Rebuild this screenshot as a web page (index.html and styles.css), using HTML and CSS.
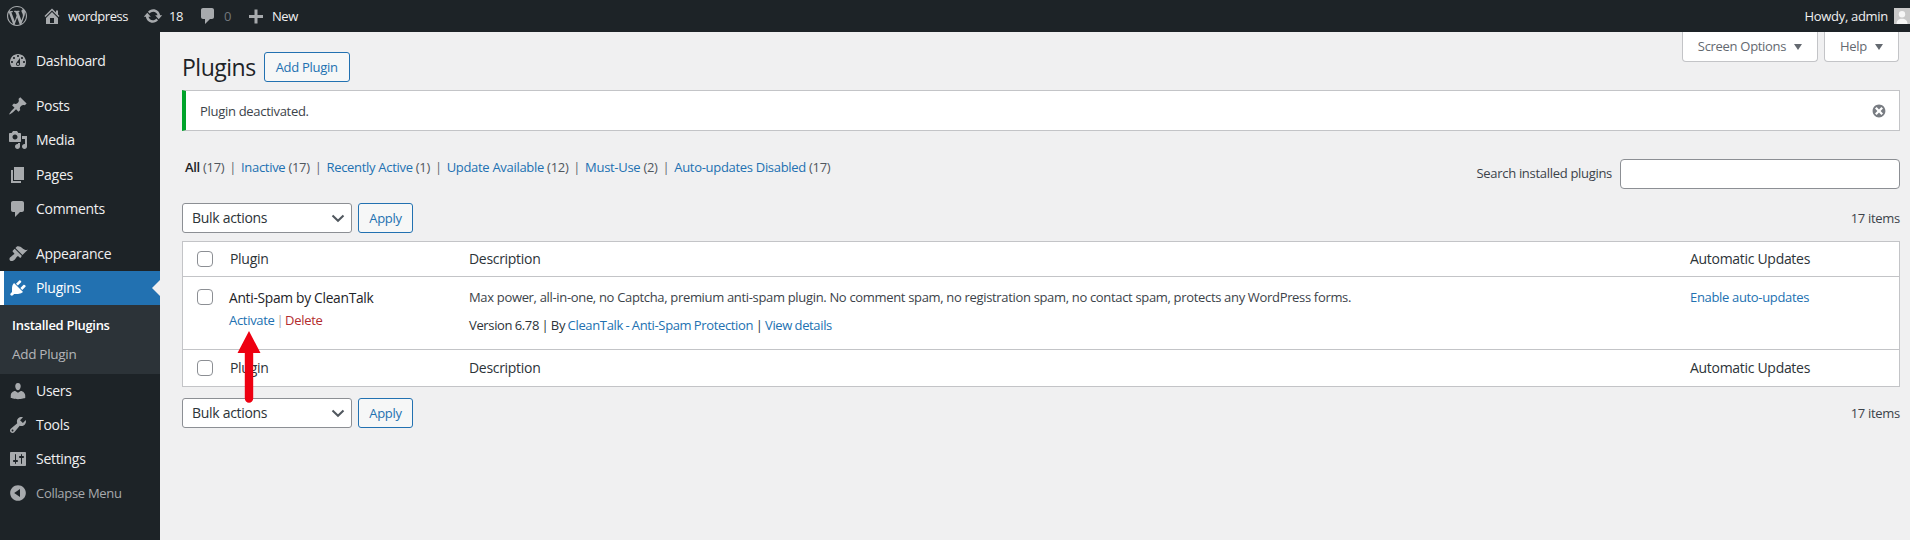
FILE: index.html
```html
<!DOCTYPE html>
<html lang="en">
<head>
<meta charset="utf-8">
<title>Plugins</title>
<link rel="stylesheet" href="styles.css">
</head>
<body>
<header class="adminbar">
  <div class="bar-left">
    <svg class="ab-logo" viewBox="0 0 20 20"><path d="M20 10c0-5.51-4.49-10-10-10C4.48 0 0 4.49 0 10c0 5.52 4.48 10 10 10 5.51 0 10-4.48 10-10zM7.78 15.37L4.37 6.22c.55-.02 1.17-.08 1.17-.08.5-.06.44-1.13-.06-1.11 0 0-1.45.11-2.37.11-.18 0-.37 0-.58-.01C4.12 2.69 6.87 1.11 10 1.11c2.33 0 4.45.87 6.05 2.34-.68-.11-1.65.39-1.65 1.58 0 .74.45 1.36.9 2.1.35.61.55 1.36.55 2.46 0 1.49-1.4 5-1.4 5l-3.03-8.37c.54-.02.82-.17.82-.17.5-.05.44-1.25-.06-1.22 0 0-1.44.12-2.38.12-.87 0-2.33-.12-2.33-.12-.5-.03-.56 1.2-.06 1.22l.92.08 1.26 3.41zM17.41 10c.24-.64.74-1.87.43-4.25.7 1.29 1.05 2.71 1.05 4.25 0 3.29-1.73 6.24-4.4 7.78.97-2.59 1.94-5.2 2.92-7.78zM6.1 18.09C3.12 16.65 1.11 13.53 1.11 10c0-1.3.23-2.48.72-3.59C3.25 10.3 4.67 14.2 6.1 18.09zm4.03-6.63l2.58 6.98c-.86.29-1.76.45-2.71.45-.79 0-1.57-.11-2.29-.33.81-2.38 1.62-4.74 2.42-7.1z"/></svg>
    <span class="ab-item ab-home"><svg class="ab-icon" viewBox="0 0 20 20"><path d="M16 8.5l1.53 1.53-1.06 1.06L10 4.62l-6.47 6.47-1.06-1.06L10 2.5l4 4v-2h2v4zm-6-2.46l6 5.99V18H4v-5.97zM12 17v-5H8v5h4z"/></svg>wordpress</span>
    <span class="ab-item ab-upd"><svg class="ab-icon" viewBox="0 0 20 20"><path d="M10.2 3.28c3.53 0 6.43 2.61 6.92 6h2.08l-3.5 4-3.5-4h2.32c-.45-1.97-2.21-3.45-4.32-3.45-1.45 0-2.73.71-3.54 1.78L4.95 5.66C6.23 4.2 8.11 3.28 10.2 3.28zm-.4 13.44c-3.52 0-6.43-2.61-6.92-6H.8l3.5-4c1.17 1.33 2.33 2.67 3.5 4H5.48c.45 1.97 2.21 3.45 4.32 3.45 1.45 0 2.73-.71 3.54-1.78l1.71 1.95c-1.28 1.46-3.15 2.38-5.25 2.38z"/></svg>18</span>
    <span class="ab-item ab-com"><svg class="ab-icon" viewBox="0 0 20 20"><path d="M5 2h9c1.1 0 2 .9 2 2v7c0 1.1-.9 2-2 2h-2l-5 5v-5H5c-1.1 0-2-.9-2-2V4c0-1.1.9-2 2-2z"/></svg><span class="ab-zero">0</span></span>
    <span class="ab-item ab-new"><svg class="ab-icon" viewBox="0 0 20 20"><path d="M17 9v3h-5.5v5.5h-3V12H3V9h5.5V3.500h3V9z"/></svg>New</span>
  </div>
  <div class="bar-right">Howdy, admin<svg class="avatar" viewBox="0 0 16 16"><rect width="16" height="16" fill="#c9c9c9"/><circle cx="8" cy="6.300" r="3.200" fill="#f6f6f6"/><path d="M2.500 16c0-3.600 2.400-5.200 5.500-5.200s5.500 1.600 5.500 5.200z" fill="#f6f6f6"/></svg></div>
</header>

<div class="shell">
  <nav class="sidebar">
    <a class="menu-item first"><svg viewBox="0 0 20 20"><path fill-rule="evenodd" d="M3.760 16h12.480c1.100-1.370 1.760-3.110 1.760-5 0-4.420-3.580-8-8-8s-8 3.580-8 8c0 1.890.66 3.630 1.760 5zM10 4c.55 0 1 .45 1 1s-.45 1-1 1-1-.45-1-1 .45-1 1-1zM6 6c.55 0 1 .45 1 1s-.45 1-1 1-1-.45-1-1 .45-1 1-1zm8 0c.55 0 1 .45 1 1s-.45 1-1 1-1-.45-1-1 .45-1 1-1zm-5.370 5.550L12 7v6c0 1.100-.9 2-2 2s-2-.9-2-2c0-.57.24-1.080.63-1.450zM4 10c.55 0 1 .45 1 1s-.45 1-1 1-1-.45-1-1 .45-1 1-1zm12 0c.55 0 1 .45 1 1s-.45 1-1 1-1-.45-1-1 .45-1 1-1zm-5 3c0-.55-.45-1-1-1s-1 .45-1 1 .45 1 1 1 1-.45 1-1z"/></svg>Dashboard</a>
    <a class="menu-item group"><svg viewBox="0 0 20 20"><path d="M10.440 3.020l1.820-1.820 6.360 6.350-1.830 1.820c-1.050-.68-2.480-.57-3.410.36l-.75.75c-.92.93-1.040 2.350-.35 3.410l-1.830 1.820-2.410-2.410-2.800 2.790c-.42.42-3.380 2.710-3.800 2.290s1.860-3.390 2.280-3.810l2.790-2.790L4.100 9.360l1.830-1.820c1.050.69 2.480.57 3.400-.36l.75-.75c.93-.92 1.050-2.350.36-3.410z"/></svg>Posts</a>
    <a class="menu-item"><svg viewBox="0 0 20 20"><path fill-rule="evenodd" d="M13 11V4c0-.55-.45-1-1-1h-1.670L9 1H5L3.670 3H2c-.55 0-1 .45-1 1v7c0 .55.45 1 1 1h10c.55 0 1-.45 1-1zM7 4.500c1.380 0 2.500 1.120 2.500 2.500S8.380 9.500 7 9.500 4.500 8.380 4.500 7 5.620 4.500 7 4.500zM14 6h5v10.500c0 1.380-1.120 2.500-2.500 2.500S14 17.880 14 16.500s1.120-2.500 2.500-2.500c.17 0 .34.02.5.05V9h-3V6zm-4 8.050V13h2v3.500c0 1.380-1.120 2.500-2.500 2.500S7 17.880 7 16.500 8.120 14 9.500 14c.17 0 .34.02.5.05z"/></svg>Media</a>
    <a class="menu-item pages"><svg viewBox="0 0 20 20"><path d="M6 15V2h10v13H6zm-1 1h8v2H3V5h2v11z"/></svg>Pages</a>
    <a class="menu-item"><svg viewBox="0 0 20 20"><path d="M5 2h9c1.100 0 2 .9 2 2v7c0 1.100-.9 2-2 2h-2l-5 5v-5H5c-1.100 0-2-.9-2-2V4c0-1.100.9-2 2-2z"/></svg>Comments</a>
    <a class="menu-item group"><svg viewBox="0 0 20 20"><path d="M14.480 11.060L7.410 3.990l1.500-1.500c.5-.56 2.300-.47 3.510.32 1.210.8 1.430 1.280 2.910 2.100 1.180.64 2.450 1.260 4.450.85zm-.71.71L6.700 4.700 4.930 6.470c-.39.39-.39 1.020 0 1.410l1.060 1.060c.39.39.39 1.030 0 1.420-.6.6-1.430 1.110-2.210 1.690-.35.26-.7.53-1.010.84C1.430 13.230.99 15.500 2 16.500s3.270.56 4.610-.77c.31-.31.58-.66.84-1.010.58-.78 1.090-1.610 1.690-2.210.39-.39 1.030-.39 1.420 0l1.060 1.060c.39.39 1.020.39 1.410 0z"/></svg>Appearance</a>
    <a class="menu-item active"><svg viewBox="0 0 20 20"><path d="M13.110 4.360L9.870 7.600 8 5.730l3.240-3.240c.35-.34 1.050-.2 1.560.32.52.51.66 1.210.31 1.550zm-8 1.770l.91-1.120 9.010 9.010-1.190.84c-.71.71-2.630 1.160-3.820 1.160H6.140L4.900 17.260c-.59.59-1.540.59-2.120 0-.59-.58-.59-1.530 0-2.120l1.240-1.240v-3.880c0-1.130.4-3.190 1.090-3.890zm7.260 3.970l3.240-3.240c.34-.35 1.040-.21 1.550.31.52.51.66 1.210.31 1.550l-3.240 3.250z"/></svg>Plugins</a>
    <div class="submenu">
      <a class="sub-current">Installed Plugins</a>
      <a>Add Plugin</a>
    </div>
    <a class="menu-item"><svg viewBox="0 0 20 20"><path d="M10 9.250c-2.270 0-2.730-3.440-2.730-3.440C7 4.020 7.820 2 9.970 2c2.160 0 2.980 2.020 2.710 3.810 0 0-.41 3.440-2.680 3.440zm0 2.570L12.720 10c2.390 0 4.520 2.330 4.520 4.530v2.490s-3.650 1.130-7.240 1.130c-3.650 0-7.240-1.130-7.240-1.130v-2.490c0-2.250 1.940-4.480 4.470-4.480z"/></svg>Users</a>
    <a class="menu-item"><svg viewBox="0 0 20 20"><path fill-rule="evenodd" d="M16.680 9.770c-1.340 1.340-3.300 1.670-4.950.99l-5.410 6.520c-.99.99-2.590.99-3.580 0s-.99-2.590 0-3.570l6.520-5.420c-.68-1.650-.35-3.610.99-4.950 1.280-1.280 3.120-1.620 4.720-1.060l-2.890 2.890 2.820 2.820 2.860-2.870c.53 1.580.18 3.390-1.080 4.650zM3.810 16.210c.4.39 1.040.39 1.430 0 .4-.4.4-1.040 0-1.430-.39-.4-1.030-.4-1.430 0-.39.39-.39 1.030 0 1.430z"/></svg>Tools</a>
    <a class="menu-item"><svg viewBox="0 0 20 20"><path fill-rule="evenodd" d="M18 16V4c0-.55-.45-1-1-1H3c-.55 0-1 .45-1 1v12c0 .55.45 1 1 1h14c.55 0 1-.45 1-1zM8 11h1c.55 0 1 .45 1 1s-.45 1-1 1H8v1.500c0 .28-.22.5-.5.5s-.5-.22-.5-.5V13H6c-.55 0-1-.45-1-1s.45-1 1-1h1V5.500c0-.28.22-.5.5-.5s.5.22.5.5V11zm5-2h-1c-.55 0-1-.45-1-1s.45-1 1-1h1V5.500c0-.28.22-.5.5-.5s.5.22.5.5V7h1c.55 0 1 .45 1 1s-.45 1-1 1h-1v5.500c0 .28-.22.5-.5.5s-.5-.22-.5-.5V9z"/></svg>Settings</a>
    <a class="menu-item collapse"><svg viewBox="0 0 20 20"><path fill-rule="evenodd" d="M10 2.160c4.330 0 7.840 3.510 7.840 7.840s-3.510 7.840-7.840 7.840S2.160 14.330 2.160 10 5.710 2.160 10 2.160zm2 11.720V6.120L6.180 9.970z"/></svg>Collapse Menu</a>
  </nav>

  <main class="content">
    <div class="screen-links">
      <button class="tab tab-options">Screen Options<span class="caret"></span></button>
      <button class="tab tab-help">Help<span class="caret"></span></button>
    </div>
    <div class="wrap">
      <div class="title-row">
        <h1>Plugins</h1>
        <a class="btn btn-add">Add Plugin</a>
      </div>
      <div class="notice">
        <p>Plugin deactivated.</p>
        <svg class="dismiss" viewBox="0 0 20 20"><path d="M10 2c4.420 0 8 3.580 8 8s-3.580 8-8 8-8-3.580-8-8 3.580-8 8-8zm5 11l-3-3 3-3-2-2-3 3-3-3-2 2 3 3-3 3 2 2 3-3 3 3z"/></svg>
      </div>
      <div class="filter-row">
        <ul class="views">
          <li><b class="current">All</b> <span class="count">(17)</span></li>
          <li><a>Inactive</a> <span class="count">(17)</span></li>
          <li><a>Recently Active</a> <span class="count">(1)</span></li>
          <li><a>Update Available</a> <span class="count">(12)</span></li>
          <li><a>Must-Use</a> <span class="count">(2)</span></li>
          <li><a>Auto-updates Disabled</a> <span class="count">(17)</span></li>
        </ul>
        <div class="search">
          <label for="plugin-search">Search installed plugins</label>
          <input id="plugin-search" type="search">
        </div>
      </div>
      <div class="tablenav top">
        <div class="bulk">
          <div class="select-wrap">
            <select><option>Bulk actions</option></select>
            <svg class="chev" viewBox="0 0 16 16"><path d="M2.500 5.500L8 10.800l5.500-5.300" fill="none" stroke="#50575e" stroke-width="2"/></svg>
          </div>
          <a class="btn btn-apply">Apply</a>
        </div>
        <span class="items">17 items</span>
      </div>
      <table class="plugins">
        <colgroup><col class="c-cb"><col class="c-name"><col class="c-desc"><col class="c-auto"></colgroup>
        <thead>
          <tr><td class="cb"><input type="checkbox"></td><th>Plugin</th><th>Description</th><th>Automatic Updates</th></tr>
        </thead>
        <tbody>
          <tr>
            <td class="cb"><input type="checkbox"></td>
            <td class="name">
              <strong>Anti-Spam by CleanTalk</strong>
              <div class="row-actions"><a>Activate</a> <span class="sep">|</span> <a class="del">Delete</a></div>
            </td>
            <td class="desc">
              <p>Max power, all-in-one, no Captcha, premium anti-spam plugin. No comment spam, no registration spam, no contact spam, protects any WordPress forms.</p>
              <p class="ver">Version 6.78 | By <a>CleanTalk - Anti-Spam Protection</a> | <a>View details</a></p>
            </td>
            <td class="auto"><a>Enable auto-updates</a></td>
          </tr>
        </tbody>
        <tfoot>
          <tr><td class="cb"><input type="checkbox"></td><th>Plugin</th><th>Description</th><th>Automatic Updates</th></tr>
        </tfoot>
      </table>
      <div class="tablenav bottom">
        <div class="bulk">
          <div class="select-wrap">
            <select><option>Bulk actions</option></select>
            <svg class="chev" viewBox="0 0 16 16"><path d="M2.500 5.500L8 10.800l5.500-5.300" fill="none" stroke="#50575e" stroke-width="2"/></svg>
          </div>
          <a class="btn btn-apply">Apply</a>
        </div>
        <span class="items">17 items</span>
      </div>
    </div>
    <svg class="red-arrow" viewBox="0 0 24 72"><path d="M12 0L23.500 22H16.200V67.500a4.200 4.200 0 0 1-8.400 0V22H.5z"/></svg>
  </main>
</div>
</body>
</html>
```
FILE: styles.css
```css
* { box-sizing: border-box; }
html, body { margin: 0; height: 100%; overflow: hidden; }
body {
  font-family: "Open Sans", "Liberation Sans", sans-serif;
  font-size: 13px;
  letter-spacing: -0.3px;
  line-height: 1.4;
  color: #3c434a;
  background: #f0f0f1;
  display: flex;
  flex-direction: column;
}
p { margin: 0; }
a { color: #2271b1; text-decoration: none; }

/* admin bar */
.adminbar {
  height: 32px;
  flex: none;
  background: #1d2327;
  color: #f0f0f1;
  display: flex;
  justify-content: space-between;
  align-items: center;
}
.bar-left { display: flex; align-items: center; height: 100%; letter-spacing: -0.45px; }
.ab-logo { width: 20px; height: 20px; margin-left: 7px; fill: #a7aaad; }
.ab-item { display: flex; align-items: center; }
.ab-icon { width: 20px; height: 20px; fill: #a7aaad; flex: none; }
.ab-home { margin-left: 15px; }
.ab-home .ab-icon { margin-right: 6px; }
.ab-upd { margin-left: 15px; }
.ab-upd .ab-icon { margin-right: 6px; }
.ab-com { margin-left: 15px; }
.ab-com .ab-icon { margin-right: 6px; }
.ab-zero { color: #72777c; }
.ab-new { margin-left: 15px; }
.ab-new .ab-icon { margin-right: 6px; }
.bar-right { display: flex; align-items: center; }
.avatar { width: 16px; height: 16px; margin-left: 6px; }

/* layout */
.shell { flex: 1; display: flex; min-height: 0; }
.sidebar {
  width: 160px;
  flex: none;
  background: #1d2327;
  padding-top: 12px;
}
.menu-item {
  height: 34px;
  display: flex;
  align-items: center;
  padding-left: 8px;
  color: #f0f0f1;
  font-size: 14px;
  position: relative;
}
.menu-item svg { width: 20px; height: 20px; margin-right: 8px; fill: #a7aaad; flex: none; }
.menu-item.group { margin-top: 11px; }
.menu-item.pages { margin-top: 1px; }
.menu-item.active {
  background: #2271b1;
  color: #fff;
  border-left: 4px solid #fff;
  padding-left: 4px;
}
.menu-item.active svg { fill: #fff; }
.menu-item.active::after {
  content: "";
  position: absolute;
  right: 0;
  top: 9px;
  border: 8px solid transparent;
  border-right-color: #f0f0f1;
  border-left-width: 0;
}
.submenu {
  height: 69px;
  background: #2c3338;
  padding-top: 6px;
  display: flex;
  flex-direction: column;
}
.submenu a {
  height: 29px;
  padding-left: 12px;
  color: rgba(240, 240, 241, .7);
  display: flex;
  align-items: center;
  font-size: 13.500px;
}
.submenu a.sub-current { color: #fff; font-weight: 600; font-size: 13px; }
.menu-item.collapse { color: #a7aaad; font-size: 13px; }

/* content */
.content { flex: 1; position: relative; min-width: 0; }
.screen-links {
  height: 30px;
  display: flex;
  justify-content: flex-end;
  gap: 6px;
  padding-right: 11px;
}
.tab {
  height: 30px;
  background: #fff;
  border: 1px solid #c3c4c7;
  border-top: 0;
  border-radius: 0 0 4px 4px;
  color: #646970;
  font: inherit;
  letter-spacing: inherit;
  padding: 0;
  display: flex;
  align-items: center;
  justify-content: center;
  gap: 8px;
}
.tab-options { width: 136px; }
.tab-help { width: 75px; }
.caret {
  width: 0; height: 0;
  border: 4.500px solid transparent;
  border-top: 6px solid #646970;
  border-bottom: 0;
}
.wrap { margin: -10px 10px 0 22px; }
.title-row { display: flex; align-items: center; height: 30px; }
h1 {
  margin: 0 8px 0 0;
  font-size: 23px;
  font-weight: 400;
  letter-spacing: -0.5px;
  color: #1d2327;
  line-height: 30px;
}
.btn {
  display: flex;
  align-items: center;
  justify-content: center;
  height: 30px;
  border: 1px solid #2271b1;
  border-radius: 3px;
  background: #f6f7f7;
  color: #2271b1;
}
.btn-add { width: 86px; }
.btn-apply { width: 55px; }
.notice {
  margin-top: 8px;
  height: 41px;
  background: #fff;
  border: 1px solid #c3c4c7;
  border-left: 4px solid #00a32a;
  display: flex;
  align-items: center;
  justify-content: space-between;
  padding: 1px 12px 0 14px;
}
.dismiss { width: 16px; height: 16px; fill: #787c82; }
.filter-row {
  margin-top: 23px;
  height: 33px;
  display: flex;
  justify-content: space-between;
}
.views {
  list-style: none;
  margin: 0;
  padding: 0 0 0 3px;
  display: flex;
  height: 26px;
  align-items: center;
}
.views li { white-space: pre; }
.views li + li::before { content: "|"; color: #646970; margin: 0 4.900px; }
.views .current { color: #1d2327; font-weight: 600; }
.count { color: #50575e; }
.search { display: flex; align-items: center; gap: 8px; height: 36px; padding-top: 3px; }
.search input {
  width: 280px;
  height: 30px;
  border: 1px solid #8c8f94;
  border-radius: 4px;
  background: #fff;
  margin: 0;
}
.tablenav {
  display: flex;
  justify-content: space-between;
  align-items: center;
  height: 30px;
}
.tablenav.top { margin-top: 16px; }
.tablenav.bottom { margin-top: 11px; }
.bulk { display: flex; gap: 6px; }
.select-wrap { position: relative; width: 170px; }
.select-wrap select {
  appearance: none;
  width: 100%;
  height: 30px;
  margin: 0;
  padding: 0 24px 0 9px;
  border: 1px solid #8c8f94;
  border-radius: 3px;
  background: #fff;
  color: #2c3338;
  font: inherit;
  font-size: 14px;
  letter-spacing: inherit;
}
.chev { position: absolute; right: 6px; top: 7px; width: 16px; height: 16px; }
.items { color: #3c434a; }
.plugins {
  margin-top: 8px;
  width: 100%;
  table-layout: fixed;
  border-collapse: separate;
  border-spacing: 0;
  border: 1px solid #c3c4c7;
  background: #fff;
}
.c-cb { width: 37px; }
.c-name { width: 239px; }
.c-auto { width: 219px; }
.plugins th, .plugins td { text-align: left; font-weight: 400; vertical-align: top; padding: 0 10px; }
.plugins thead th, .plugins thead td { height: 35px; vertical-align: middle; border-bottom: 1px solid #c3c4c7; }
.plugins tfoot th, .plugins tfoot td { height: 37px; vertical-align: middle; border-top: 1px solid #c3c4c7; }
.plugins th { color: #2c3338; font-size: 14px; }
.plugins td.cb { padding: 0 0 0 14px; }
.plugins tbody td { height: 72px; padding-top: 11px; }
.plugins tbody td.cb { padding-top: 12px; }
input[type="checkbox"] {
  appearance: none;
  display: block;
  width: 16px;
  height: 16px;
  margin: 0;
  border: 1px solid #8c8f94;
  border-radius: 4px;
  background: #fff;
}
.name strong { display: block; font-weight: 400; color: #1d2327; font-size: 13.800px; margin-left: -1px; }
.row-actions { margin: 4px 0 0 -1px; color: #a7aaad; white-space: pre; word-spacing: -1.300px; }
.del { color: #b32d2e; }
.desc p { white-space: nowrap; color: #3c434a; letter-spacing: -0.33px; }
.desc .ver { margin-top: 10px; color: #2c3338; letter-spacing: -0.35px; word-spacing: -0.5px; }
.auto a { letter-spacing: -0.33px; }

.red-arrow {
  position: absolute;
  left: 77px;
  top: 299px;
  width: 24px;
  height: 72px;
  fill: #ee0011;
}
```
